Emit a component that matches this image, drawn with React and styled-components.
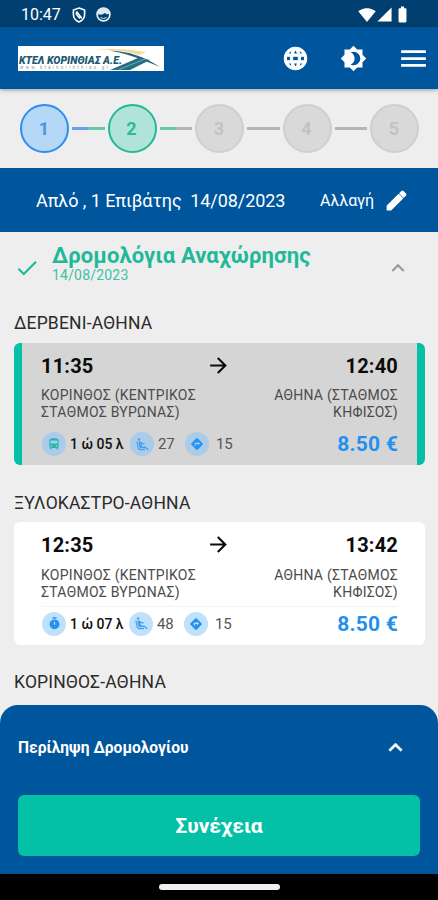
import React from "react";
import styled, { createGlobalStyle, ThemeProvider } from "styled-components";
import {
  MdAirlineSeatReclineExtra,
  MdArrowForward,
  MdBatteryFull,
  MdBrightness4,
  MdCheck,
  MdDirections,
  MdDirectionsBus,
  MdEdit,
  MdKeyboardArrowUp,
  MdLanguage,
  MdMenu,
  MdSignalCellular4Bar,
  MdSignalWifi4Bar
} from "react-icons/md";

const theme = {
  primary: "#00569d",
  primaryDark: "#003f6f",
  accent: "#04c0a7",
  link: "#2390ee",
  background: "#eeeeee"
};

const GlobalStyle = createGlobalStyle`
  * {
    box-sizing: border-box;
  }
  body {
    margin: 0;
    overflow: hidden;
    font-family: Roboto, "Noto Sans", sans-serif;
    background: #eeeeee;
  }
  svg {
    display: block;
    flex-shrink: 0;
  }
`;

const Screen = styled.div`
  display: flex;
  flex-direction: column;
  height: 900px;
  overflow: hidden;
  background: ${p => p.theme.background};
`;

const StatusBar = styled.div`
  flex-shrink: 0;
  display: flex;
  align-items: center;
  height: 27px;
  padding: 2px 26px 0 21px;
  color: #fff;
  background: ${p => p.theme.primaryDark};
`;
const Clock = styled.span`
  width: 51px;
  font-size: 16px;
  line-height: 20px;
`;
const Notices = styled.div`
  flex: 1;
  display: flex;
  align-items: center;
  gap: 10px;
`;
const Signals = styled.div`
  display: flex;
  align-items: center;
`;

const Header = styled.header`
  flex-shrink: 0;
  display: flex;
  align-items: center;
  justify-content: space-between;
  height: 62px;
  padding: 0 8px 0 18px;
  color: #fff;
  background: ${p => p.theme.primary};
  box-shadow: 0 1px 4px rgba(0, 0, 0, 0.35);
  z-index: 1;
`;
const Actions = styled.div`
  display: flex;
  align-items: center;
`;
const IconButton = styled.span`
  display: flex;
  justify-content: ${p => p.$align || "center"};
  width: ${p => p.$width}px;
`;
const GlobeIcon = styled(MdLanguage)`
  path:not([fill="none"]) {
    stroke: currentColor;
    stroke-width: 0.9px;
  }
`;

const Stepper = styled.div`
  flex-shrink: 0;
  display: flex;
  align-items: center;
  height: 79px;
  padding: 0 19px 0 20px;
`;
const stepColors = {
  done: { line: "#2e8df0", fill: "#b4d8f5", text: "#4a95e4" },
  current: { line: "#24b899", fill: "#b0e4d9", text: "#2cb99c" },
  idle: { line: "#cfcfcf", fill: "#d9d9d9", text: "#c2c2c2" }
};
const Step = styled.div`
  flex-shrink: 0;
  display: flex;
  align-items: center;
  justify-content: center;
  width: 49px;
  height: 49px;
  padding-right: 1px;
  border-radius: 50%;
  font-size: 18px;
  font-weight: 700;
  border: 2px solid ${p => stepColors[p.$state].line};
  background: ${p => stepColors[p.$state].fill};
  color: ${p => stepColors[p.$state].text};
`;
const StepLine = styled.div`
  flex: 1;
  height: 3px;
  margin: 0 3px;
  background: linear-gradient(90deg, ${p => p.$from} 50%, ${p => p.$to} 50%);
`;

const SearchBar = styled.div`
  flex-shrink: 0;
  display: flex;
  align-items: center;
  justify-content: space-between;
  height: 64px;
  padding: 0 29px 0 36px;
  color: #fff;
  font-size: 18px;
  background: ${p => p.theme.primary};
`;
const SearchText = styled.span`
  white-space: pre;
  letter-spacing: -0.07px;
`;
const ChangeButton = styled.span`
  display: flex;
  align-items: center;
  gap: 10px;
  font-size: 16px;
  letter-spacing: -0.1px;
`;
const PencilIcon = styled(MdEdit)`
  path:not([fill="none"]) {
    stroke: currentColor;
    stroke-width: 1px;
    stroke-linejoin: round;
  }
`;

const SectionHead = styled.div`
  flex-shrink: 0;
  display: flex;
  align-items: center;
  height: 72px;
  padding: 0 27px 0 14px;
  color: #1fb999;
`;
const SectionTitle = styled.div`
  flex: 1;
  margin-left: 12px;
  padding-bottom: 10px;
  h2 {
    margin: 0;
    font-size: 22px;
    font-weight: 700;
    line-height: 24px;
    letter-spacing: 0.12px;
  }
  p {
    margin: 0;
    font-size: 14px;
    line-height: 15px;
    letter-spacing: 0.2px;
    color: #40c0a5;
  }
`;

const RouteList = styled.div`
  flex: 1;
  min-height: 0;
  overflow: hidden;
  padding: 0 13px 0 14px;
`;
const RouteName = styled.h3`
  margin: 0;
  height: 39px;
  padding-top: 9.3px;
  font-size: 17.5px;
  font-weight: 400;
  line-height: 20px;
  letter-spacing: 0.18px;
  color: #2b2b2b;
`;
const Card = styled.div`
  height: 122.3px;
  margin-bottom: 18px;
  padding: 10px 19px 0;
  border-radius: 6px;
  border: solid ${p => (p.$selected ? p.theme.accent : "#fff")};
  border-width: 0 8px;
  background: ${p => (p.$selected ? "#d5d5d5" : "#fff")};
`;
const Times = styled.div`
  display: flex;
  align-items: center;
  justify-content: space-between;
  height: 26.3px;
  font-size: 20px;
  font-weight: 700;
  letter-spacing: 0.2px;
  color: #0b0b0b;
  svg {
    margin: 0 2px 2px 0;
  }
`;
const Stations = styled.div`
  display: flex;
  justify-content: space-between;
  height: 41px;
  padding-top: 8px;
  font-size: 14px;
  line-height: 17px;
  letter-spacing: 0.26px;
  color: #4c4c4c;
`;
const Station = styled.span`
  width: ${p => p.$width}px;
  text-align: ${p => p.$align || "left"};
  white-space: pre-line;
`;
const Details = styled.div`
  display: flex;
  align-items: center;
  height: 35px;
  margin-top: 6px;
  padding-left: 1px;
  border-top: 1px solid ${p => (p.$selected ? "transparent" : "#f4f4f4")};
`;
const Badge = styled.span`
  display: flex;
  align-items: center;
  justify-content: center;
  width: 24px;
  height: 24px;
  border-radius: 50%;
  color: ${p => p.$color || "#2492f2"};
  background: ${p => (p.$selected ? "#aacce8" : "#c0e1fb")};
`;
const Detail = styled.span`
  width: ${p => p.$width}px;
  padding-left: ${p => p.$indent || 4}px;
  font-size: 15px;
  letter-spacing: -0.15px;
  color: #555;
  white-space: nowrap;
`;
const Duration = styled(Detail)`
  font-size: 14px;
  font-weight: 500;
  letter-spacing: 0;
  color: #111;
`;
const Price = styled.span`
  flex: 1;
  text-align: right;
  font-size: 21px;
  font-weight: 700;
  letter-spacing: 0.2px;
  color: ${p => p.theme.link};
`;

const Summary = styled.div`
  flex-shrink: 0;
  height: 169px;
  padding: 0 18px;
  border-radius: 18px 18px 0 0;
  background: ${p => p.theme.primary};
  color: #fff;
`;
const SummaryHead = styled.div`
  display: flex;
  align-items: center;
  justify-content: space-between;
  height: 90px;
  padding: 0 11px 5px 0;
  font-size: 15.6px;
  font-weight: 700;
  path:not([fill="none"]) {
    stroke: currentColor;
    stroke-width: 0.5px;
  }
`;
const ContinueButton = styled.button`
  display: block;
  width: 100%;
  height: 61px;
  padding: 0;
  border: 0;
  border-radius: 6px;
  font: 700 21px Roboto, "Noto Sans", sans-serif;
  color: #fff;
  background: ${p => p.theme.accent};
`;

const NavBar = styled.div`
  flex-shrink: 0;
  display: flex;
  justify-content: center;
  height: 26px;
  padding-top: 10px;
  background: #000;
`;
const NavHandle = styled.div`
  width: 121px;
  height: 6px;
  border-radius: 3px;
  background: #f1eff1;
`;

const Logo = () => (
  <svg width="146" height="25" viewBox="0 0 146 25">
    <rect width="146" height="25" fill="#fff" />
    <path d="M76 3.5C95 1.5 113 4 128 6L121 9C108 5 96 3.5 76 3.5Z" fill="#f4d99b" />
    <path d="M91 4.5C111 5 127 11 142 21C126 14.5 113 8.5 91 4.5Z" fill="#28647e" />
    <path d="M92 24L120 12L132 14L112 24Z" fill="#237084" />
    <path d="M101 23.5L127 13" stroke="#8db8c2" strokeWidth="0.8" />
    <text
      x="1"
      y="18"
      textLength="103"
      lengthAdjust="spacingAndGlyphs"
      fontFamily="Roboto, sans-serif"
      fontSize="10"
      fontWeight="900"
      fontStyle="italic"
      fill="#1d5872"
    >
      ΚΤΕΛ ΚΟΡΙΝΘΙΑΣ Α.Ε.
    </text>
    <text
      x="2"
      y="23"
      textLength="88"
      fontFamily="Roboto, sans-serif"
      fontSize="4.5"
      fill="#8b9aa5"
    >
      www.ktelkorinthias.gr
    </text>
  </svg>
);

const ShieldIcon = () => (
  <svg width="14" height="16" viewBox="0 0 14 16" fill="none" stroke="#fff">
    <path d="M7 1L12.6 3V7.5C12.6 11.2 10.3 13.7 7 15C3.7 13.7 1.4 11.2 1.4 7.5V3Z" strokeWidth="1.6" />
    <path d="M4.5 4.5L9.8 11.2M4.5 4.5V7.5L8 11.5" strokeWidth="1.5" />
  </svg>
);

const FaceIcon = () => (
  <svg width="15" height="15" viewBox="0 0 15 15">
    <circle cx="7.5" cy="7.5" r="6.4" fill="none" stroke="#e9f0f6" strokeWidth="1.7" />
    <path d="M1.5 7C2 2.5 5 1 7.5 1S13 2.5 13.5 7C11 8 9.5 6.5 8.5 6C7 8 4 8 1.5 7Z" fill="#dce6ee" />
    <path d="M4.5 10.5Q7.5 12.5 10.5 10.5" fill="none" stroke="#dce6ee" />
  </svg>
);

const StopwatchIcon = () => (
  <svg width="13" height="13" viewBox="0 0 13 13">
    <path d="M4.5 1H8.5" stroke="currentColor" strokeWidth="1.5" />
    <circle cx="6.5" cy="7.3" r="4.9" fill="currentColor" />
    <path d="M6.5 4.8V7.8" stroke="#c0e1fb" strokeWidth="1.1" />
  </svg>
);

const steps = ["done", "current", "idle", "idle", "idle"];
const lineColors = { done: "#6b9fe8", current: "#63c8ac", idle: "#b5b5b5" };

const routes = [
  {
    name: "ΔΕΡΒΕΝΙ-ΑΘΗΝΑ",
    departure: "11:35",
    arrival: "12:40",
    duration: "1 ώ 05 λ",
    seats: 27,
    stops: 15,
    selected: true
  },
  {
    name: "ΞΥΛΟΚΑΣΤΡΟ-ΑΘΗΝΑ",
    departure: "12:35",
    arrival: "13:42",
    duration: "1 ώ 07 λ",
    seats: 48,
    stops: 15,
    selected: false
  }
];

const RouteCard = ({ route }) => {
  const { selected } = route;
  return (
    <Card $selected={selected}>
      <Times>
        <span>{route.departure}</span>
        <MdArrowForward size={25} />
        <span>{route.arrival}</span>
      </Times>
      <Stations>
        <Station $width={170}>{"ΚΟΡΙΝΘΟΣ (ΚΕΝΤΡΙΚΟΣ\nΣΤΑΘΜΟΣ ΒΥΡΩΝΑΣ)"}</Station>
        <Station $width={140} $align="right">
          {"ΑΘΗΝΑ (ΣΤΑΘΜΟΣ\nΚΗΦΙΣΟΣ)"}
        </Station>
      </Stations>
      <Details $selected={selected}>
        <Badge $selected={selected} $color={selected ? "#25b7ae" : undefined}>
          {selected ? <MdDirectionsBus size={14} /> : <StopwatchIcon />}
        </Badge>
        <Duration $width={selected ? 64 : 63}>{route.duration}</Duration>
        <Badge $selected={selected} $color="#4a9df2">
          <MdAirlineSeatReclineExtra size={15} />
        </Badge>
        <Detail $width={31}>{route.seats}</Detail>
        <Badge $selected={selected}>
          <MdDirections size={14} />
        </Badge>
        <Detail $width={31} $indent={7}>{route.stops}</Detail>
        <Price>8.50 €</Price>
      </Details>
    </Card>
  );
};

const App = () => (
  <ThemeProvider theme={theme}>
    <GlobalStyle />
    <Screen>
      <StatusBar>
        <Clock>10:47</Clock>
        <Notices>
          <ShieldIcon />
          <FaceIcon />
        </Notices>
        <Signals>
          <MdSignalWifi4Bar size={18} />
          <MdSignalCellular4Bar size={17} />
          <MdBatteryFull size={19} />
        </Signals>
      </StatusBar>
      <Header>
        <Logo />
        <Actions>
          <IconButton $width={58}>
            <GlobeIcon size={27} />
          </IconButton>
          <IconButton $width={59}>
            <MdBrightness4 size={27} />
          </IconButton>
          <IconButton $width={47} $align="flex-end">
            <MdMenu size={33} />
          </IconButton>
        </Actions>
      </Header>
      <Stepper>
        {steps.map((state, i) => (
          <React.Fragment key={i}>
            {i > 0 && (
              <StepLine $from={lineColors[steps[i - 1]]} $to={lineColors[state]} />
            )}
            <Step $state={state}>{i + 1}</Step>
          </React.Fragment>
        ))}
      </Stepper>
      <SearchBar>
        <SearchText>{"Απλό , 1 Επιβάτης  14/08/2023"}</SearchText>
        <ChangeButton>
          Αλλαγή
          <PencilIcon size={25} />
        </ChangeButton>
      </SearchBar>
      <SectionHead>
        <MdCheck size={26} />
        <SectionTitle>
          <h2>Δρομολόγια Αναχώρησης</h2>
          <p>14/08/2023</p>
        </SectionTitle>
        <MdKeyboardArrowUp size={26} color="#999" />
      </SectionHead>
      <RouteList>
        {routes.map(route => (
          <React.Fragment key={route.name}>
            <RouteName>{route.name}</RouteName>
            <RouteCard route={route} />
          </React.Fragment>
        ))}
        <RouteName>ΚΟΡΙΝΘΟΣ-ΑΘΗΝΑ</RouteName>
      </RouteList>
      <Summary>
        <SummaryHead>
          Περίληψη Δρομολογίου
          <MdKeyboardArrowUp size={27} />
        </SummaryHead>
        <ContinueButton>Συνέχεια</ContinueButton>
      </Summary>
      <NavBar>
        <NavHandle />
      </NavBar>
    </Screen>
  </ThemeProvider>
);

export default App;
